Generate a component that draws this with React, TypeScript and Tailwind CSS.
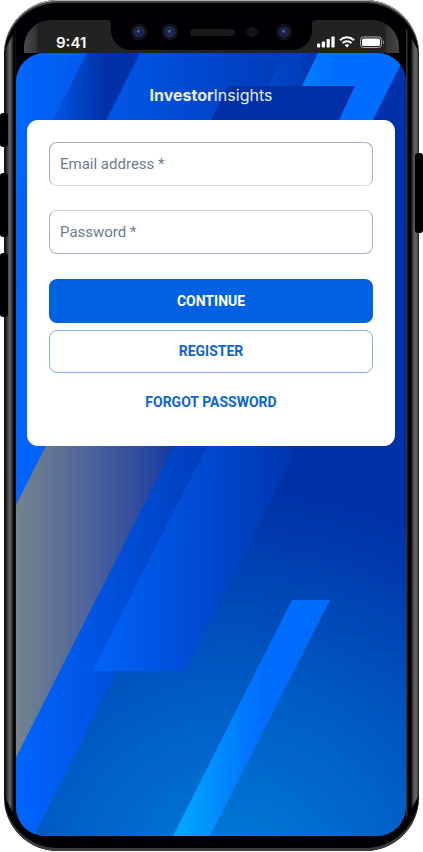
import React from "react";

function Lens({ glow }: { glow: string }) {
  return (
    <svg viewBox="0 0 16 16" className="h-4 w-4 shrink-0" aria-hidden="true">
      <circle cx="8" cy="8" r="8" fill="#1c1c1f" />
      <circle cx="8" cy="8" r="7.2" fill="#0c0d14" />
      <circle cx="8" cy="8" r="5.8" fill={glow} />
      <circle cx="8" cy="8" r="3.4" fill="#1a2444" />
      <circle cx="7.6" cy="7.4" r="1.8" fill="#34466f" />
      <circle cx="7.2" cy="7" r="0.7" fill="#7f93b8" />
    </svg>
  );
}

function Notch() {
  return (
    <div aria-hidden="true" className="absolute inset-x-[87px] top-0 h-[30px] rounded-b-[20px] bg-[#000004]">
      <svg viewBox="0 0 8 8" className="absolute -left-1 top-0 h-1 w-1"><path d="M0 0H8V8C8 3 6 0 0 0Z" fill="#000004" /></svg>
      <svg viewBox="0 0 8 8" className="absolute -right-1 top-0 h-1 w-1"><path d="M8 0H0V8C0 3 2 0 8 0Z" fill="#000004" /></svg>
      <div className="flex items-center justify-center pt-1">
        <Lens glow="#1d2a50" />
        <span className="ml-[15px] mr-3"><Lens glow="#1d2a50" /></span>
        <span className="h-[7px] w-[45px] rounded-full bg-[#1a1a1a]" />
        <span className="ml-3 mr-[19px] h-[10px] w-[10px] rounded-full border border-[#202020] bg-[#121212]" />
        <Lens glow="#251c4e" />
      </div>
    </div>
  );
}

function StatusBar() {
  return (
    <div className="relative mx-4 mt-5 h-[33px] rounded-t-[27px] bg-[linear-gradient(to_right,#494949_0px,#343434_12px,#222_14px,#222_calc(100%-14px),#343434_calc(100%-12px),#454545_100%)]">
      <Notch />
      <div className="relative flex h-full items-end justify-between pb-[5px] pl-8 pr-[14px]">
        <span className="font-['Inter',sans-serif] text-[15px] font-semibold leading-[11px] text-white">9:41</span>
        <svg viewBox="0 0 68 12" className="h-3 w-[68px]" aria-hidden="true">
          <g fill="#fff">
            <rect x="0" y="7.5" width="3.2" height="4" rx="0.8" />
            <rect x="4.8" y="5.5" width="3.2" height="6" rx="0.8" />
            <rect x="9.6" y="3" width="3.2" height="8.5" rx="0.8" />
            <rect x="14.4" y="0.5" width="3.2" height="11" rx="0.8" />
            <path d="M30 11.4 27.6 9.1Q30 7.2 32.4 9.1Z" />
            <rect x="45" y="2.4" width="18" height="7.6" rx="1.6" />
            <path d="M66 4.2c1.5.5 1.5 3.4 0 4Z" opacity=".5" />
          </g>
          <g fill="none" stroke="#fff" strokeWidth="2">
            <path d="M23 4.2C27 .4 33 .4 37 4.2" />
            <path d="M25.5 7C28 4.6 32 4.6 34.5 7" />
          </g>
          <rect x="43.5" y="0.9" width="21" height="10.6" rx="3" fill="none" stroke="#aaa" />
        </svg>
      </div>
    </div>
  );
}

function Backdrop() {
  return (
    <svg viewBox="16 53 390 783" preserveAspectRatio="none" className="absolute inset-0 h-full w-full" aria-hidden="true">
      <defs>
        <radialGradient id="base" gradientUnits="userSpaceOnUse" cx="235" cy="890" r="400">
          <stop offset="0" stopColor="#007fdc" />
          <stop offset="0.5" stopColor="#005cc4" />
          <stop offset="1" stopColor="#0031a9" />
        </radialGradient>
        <linearGradient id="left" gradientUnits="userSpaceOnUse" x1="16" x2="87" y1="0" y2="0">
          <stop stopColor="#0068ff" /><stop offset="1" stopColor="#0058ea" />
        </linearGradient>
        <linearGradient id="fold" gradientUnits="userSpaceOnUse" x1="16" x2="106" y1="0" y2="0">
          <stop stopColor="#0064fb" /><stop offset="0.5" stopColor="#0050d8" /><stop offset="1" stopColor="#0031a9" />
        </linearGradient>
        <linearGradient id="wide" gradientUnits="userSpaceOnUse" x1="16" x2="284" y1="0" y2="0">
          <stop stopColor="#0066ff" /><stop offset="1" stopColor="#003bb8" />
        </linearGradient>
        <linearGradient id="slim" gradientUnits="userSpaceOnUse" x1="268" x2="316" y1="0" y2="0">
          <stop stopColor="#0048cb" /><stop offset="1" stopColor="#0036af" />
        </linearGradient>
        <linearGradient id="bolt" gradientUnits="userSpaceOnUse" x1="302" x2="335" y1="0" y2="0">
          <stop stopColor="#007eff" /><stop offset="1" stopColor="#006dff" />
        </linearGradient>
        <linearGradient id="slate" gradientUnits="userSpaceOnUse" x1="16" x2="174" y1="0" y2="0">
          <stop stopColor="#74838f" /><stop offset="0.5" stopColor="#4a619b" /><stop offset="1" stopColor="#193ba2" />
        </linearGradient>
        <linearGradient id="band" gradientUnits="userSpaceOnUse" x1="16" x2="210" y1="0" y2="0">
          <stop stopColor="#0065ff" /><stop offset="1" stopColor="#003cb9" />
        </linearGradient>
        <linearGradient id="pane" gradientUnits="userSpaceOnUse" x1="93" x2="298" y1="0" y2="0">
          <stop stopColor="#0063fb" /><stop offset="1" stopColor="#0034ac" />
        </linearGradient>
        <linearGradient id="ray" gradientUnits="userSpaceOnUse" x1="178" x2="262" y1="0" y2="0">
          <stop stopColor="#00a7ff" /><stop offset="1" stopColor="#006dff" />
        </linearGradient>
      </defs>
      <rect x="16" y="53" width="390" height="783" fill="url(#base)" />
      <path d="M139 53H284L86 446 16 505V298Z" fill="url(#wide)" />
      <path d="M87 53H140L16 300V193Z" fill="url(#fold)" />
      <path d="M16 53H87L16 194Z" fill="url(#left)" />
      <path d="M16 300 48 236V446L16 505Z" fill="#0064fc" />
      <path d="M284 53H318L302 86H268Z" fill="url(#slim)" />
      <path d="M228 86H356L339 120H211Z" fill="#0030a8" />
      <path d="M318 53H406V54L373 120H339L355 86H302Z" fill="url(#bolt)" />
      <path d="M46 446H174L16 758V505Z" fill="url(#slate)" />
      <path d="M174 446H230L34 836H16V758Z" fill="url(#band)" />
      <path d="M207 446H298L185 671H93Z" fill="url(#pane)" />
      <path d="M292 600H330L210 836H173Z" fill="url(#ray)" />
    </svg>
  );
}

type FieldProps = { id: string; label: string; type: string; tone: string };

function Field({ id, label, type, tone }: FieldProps) {
  return (
    <div className="relative">
      <input id={id} type={type} required className={`block h-11 w-full rounded-lg border bg-white px-[10px] text-[15px] text-[#51637b] outline-none ${tone}`} />
      <label htmlFor={id} className="absolute left-[11px] top-3 text-[15px] leading-5 text-[#6c7c91]">{label}</label>
    </div>
  );
}

function LoginCard() {
  return (
    <form className="flex flex-col rounded-[11px] bg-white px-[22px] pb-[33px] pt-[22px]" onSubmit={(e) => e.preventDefault()}>
      <Field id="email" type="email" label="Email address *" tone="border-[#a9b2c1] border-b-[#d8dce4]" />
      <div className="mt-6">
        <Field id="password" type="password" label="Password *" tone="border-[#a9b2c1] border-t-[#c9ced8]" />
      </div>
      <button type="submit" className="mt-[25px] h-11 rounded-lg bg-[#0061e2] text-[14px] font-bold text-white">CONTINUE</button>
      <button type="button" className="mt-[7px] h-[43px] rounded-lg border border-[#80b0f0] bg-white text-[14px] font-bold text-[#0b63e0]">REGISTER</button>
      <a href="#forgot" className="mt-[18px] self-center text-[14px] font-bold leading-[22px] text-[#0b63e0]">FORGOT PASSWORD</a>
    </form>
  );
}

export default function App() {
  return (
    <div className="relative min-h-screen bg-white px-1 pb-px font-['Roboto','Liberation_Sans',sans-serif]">
      <div className="relative flex min-h-[calc(100vh-1px)] flex-col overflow-hidden rounded-[54px] bg-[#000004] pb-[15px] shadow-[inset_0_1px_0_#a9b0aa,inset_0_3px_1px_#444,inset_0_-3px_0_#3d3b3d]">
        <div aria-hidden="true" className="absolute bottom-8 left-0 top-7 w-3 bg-[linear-gradient(to_right,#050505_0px,#222_2px,#4a4748_4px,#6a6768_6px,#333_8px,#000_10px,#000_11px,#222_12px)] [clip-path:polygon(0_24px,100%_0,100%_100%,0_calc(100%-24px))]" />
        <div aria-hidden="true" className="absolute bottom-8 right-0 top-7 w-[13px] bg-[linear-gradient(to_left,#050505_0px,#444_1px,#6a6768_3px,#4a4748_6px,#000_8px,#000_11px,#333_12px)] [clip-path:polygon(0_0,100%_24px,100%_calc(100%-24px),0_100%)]" />
        <div className="px-1"><StatusBar /></div>
        <main className="relative ml-3 mr-[13px] flex-1 overflow-hidden rounded-[29px] bg-[#0031a9]">
          <Backdrop />
          <div className="relative px-[11px] pt-8">
            <h1 className="mb-[15px] text-center font-['Inter',sans-serif] text-[16px] leading-5 text-[#e6efff]"><b className="font-bold">Investor</b>Insights</h1>
            <LoginCard />
          </div>
        </main>
      </div>
      <div aria-hidden="true">
        <i className="absolute left-0 top-[113px] h-[34px] w-2 rounded-[3px] bg-black" />
        <i className="absolute left-0 top-[173px] h-16 w-2 rounded-[3px] bg-black" />
        <i className="absolute left-0 top-[253px] h-16 w-2 rounded-[3px] bg-black" />
        <i className="absolute right-0 top-[153px] h-20 w-2 rounded-[3px] bg-black" />
      </div>
    </div>
  );
}
